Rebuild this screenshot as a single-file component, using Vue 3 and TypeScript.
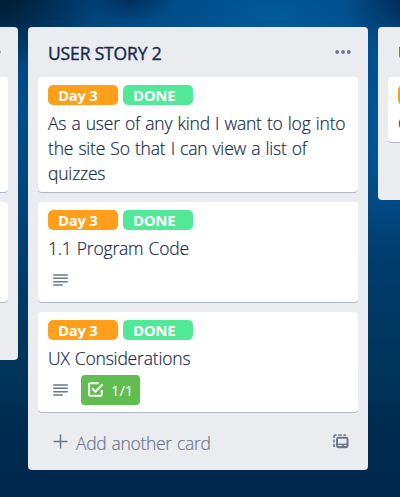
<script setup lang="ts">
interface Card {
  title: string
  description?: boolean
  checklist?: string
}

interface List {
  name: string
  cards: Card[]
}

const lists: List[] = [
  {
    name: 'USER STORY 1',
    cards: [
      { title: 'As a user of any kind I want to be able to register an account So that I can log into the site' },
      { title: 'UX Design', description: true },
    ],
  },
  {
    name: 'USER STORY 2',
    cards: [
      { title: 'As a user of any kind I want to log into the site So that I can view a list of quizzes' },
      { title: '1.1 Program Code', description: true },
      { title: 'UX Considerations', description: true, checklist: '1/1' },
    ],
  },
  {
    name: 'USER STORY 3',
    cards: [{ title: 'Code' }],
  },
]
</script>

<template>
  <main class="board">
    <section v-for="list in lists" :key="list.name" class="list">
      <header class="list-header">
        <h2>{{ list.name }}</h2>
        <svg class="dots" width="16" height="6" viewBox="0 0 16 6">
          <circle cx="2.2" cy="3" r="1.9" />
          <circle cx="8" cy="3" r="1.9" />
          <circle cx="13.8" cy="3" r="1.9" />
        </svg>
      </header>

      <div class="cards">
        <article v-for="card in list.cards" :key="card.title" class="card">
          <div class="labels">
            <span class="label orange">Day 3</span>
            <span class="label lime">DONE</span>
          </div>
          <p class="title">{{ card.title }}</p>
          <div v-if="card.description" class="badges">
            <svg class="lines" width="15" height="12" viewBox="0 0 15 12">
              <path d="M.7 1h13.6M.7 4.3h13.6M.7 7.7h13.6M.7 11h8.6" />
            </svg>
            <span v-if="card.checklist" class="checklist">
              <svg width="16" height="15" viewBox="0 0 16 15">
                <path d="M11 1.2H2.4Q1.1 1.2 1.1 2.5v10q0 1.3 1.3 1.3h10q1.3 0 1.3-1.3V8" />
                <path d="M4.1 6.2l3.3 3.5L14.6 2.2" />
              </svg>
              <span class="count">{{ card.checklist }}</span>
            </span>
          </div>
        </article>
      </div>

      <footer class="list-footer">
        <svg class="plus" width="15" height="15" viewBox="0 0 15 15">
          <path d="M7.5.5v14M.5 7.5h14" />
        </svg>
        <span class="add">Add another card</span>
        <svg class="template" width="16" height="15" viewBox="0 0 16 15">
          <path class="dash" d="M1 4V1.8Q1 1 1.8 1H3.6M5.2 1h3.6M10.4 1h2.8M1 5.4v3M1 9.8v2.4h1" />
          <rect class="frame" x="4" y="3.8" width="10.5" height="9.4" rx="1.4" />
          <path class="base" d="M4 9.6h10.5v3.6H4z" />
          <path class="slot" d="M5.2 11.5h4M11.3 11.5h2" />
        </svg>
      </footer>
    </section>
  </main>
</template>

<style>
body {
  margin: 0;
  overflow: hidden;
}
</style>

<style scoped>
.board {
  box-sizing: border-box;
  width: 400px;
  height: 497px;
  overflow: hidden;
  padding-top: 27px;
  display: flex;
  align-items: flex-start;
  gap: 10px;
  color: #172b4d;
  font-family: "Open Sans", "Noto Sans", sans-serif;
  background:
    radial-gradient(ellipse 100px 75px at 0 -5px, #001f38 15%, rgba(0, 31, 56, 0) 100%),
    radial-gradient(ellipse 60px 50px at 405px 0, rgba(0, 40, 85, 0.9), rgba(0, 40, 85, 0) 100%),
    radial-gradient(ellipse 45px 22px at 130px 0, rgba(0, 38, 80, 0.7), rgba(0, 38, 80, 0) 100%),
    radial-gradient(ellipse 190px 90px at 275px 15px, #005a9a, rgba(0, 90, 154, 0) 100%),
    radial-gradient(ellipse 50px 110px at 385px 130px, #005797, rgba(0, 87, 151, 0) 100%),
    linear-gradient(#00427a 0, #004d8a 110px, #00457c 200px, #003a67 290px, #003358 380px, #002b50 430px, #00284c 497px);
}

.list {
  flex: 0 0 340px;
  box-sizing: border-box;
  padding: 0 10px;
  border-radius: 4px;
  background: #ebecf0;
}

.list:first-child {
  margin-left: -322px;
}

.list-header {
  height: 50px;
  padding: 0 6px 0 10px;
  display: flex;
  align-items: center;
  justify-content: space-between;
}

h2 {
  margin: 3px 0 0;
  font-size: 17.5px;
  line-height: 25px;
  font-weight: 400;
  letter-spacing: -0.15px;
  -webkit-text-stroke: 0.4px currentColor;
}

.dots {
  fill: #6b778c;
  margin-right: 1px;
}

.cards {
  display: flex;
  flex-direction: column;
  gap: 10px;
}

.card {
  box-sizing: border-box;
  padding: 8px 10px 5px;
  border-radius: 4px;
  background: #fff;
  box-shadow: 0 1px 0 rgba(9, 30, 66, 0.25);
}

.labels {
  display: flex;
  gap: 5px;
}

.label {
  box-sizing: border-box;
  width: 70px;
  height: 20px;
  padding-left: 10px;
  border-radius: 5px;
  color: #fff;
  font-size: 15px;
  line-height: 21px;
  font-weight: 700;
  letter-spacing: -0.35px;
}

.orange {
  background: #ff9f1a;
}

.lime {
  background: #51e898;
}

.title {
  margin: 0;
  padding: 6px 0 1px;
  font-size: 17.5px;
  line-height: 25px;
  font-weight: 300;
  letter-spacing: -0.19px;
  word-spacing: 0.8px;
  -webkit-text-stroke: 0.2px currentColor;
}

.badges {
  height: 30px;
  padding: 3px 0 2px 5px;
  display: flex;
  align-items: center;
  gap: 13px;
}

.lines {
  fill: none;
  stroke: #6b778c;
  stroke-width: 1.4;
  stroke-linecap: round;
  margin-top: -1px;
}

.checklist {
  box-sizing: border-box;
  width: 59px;
  height: 30px;
  padding-left: 7px;
  display: flex;
  align-items: center;
  gap: 7px;
  border-radius: 4px;
  background: #61bd4f;
  color: #fff;
  font-size: 15px;
  line-height: 20px;
}

.count {
  margin-top: -1px;
  letter-spacing: -0.2px;
}

.checklist svg {
  fill: none;
  stroke: #fff;
  stroke-width: 2;
  margin-top: -2px;
}

.list-footer {
  height: 58px;
  padding: 4px 9px 0 15px;
  box-sizing: border-box;
  display: flex;
  align-items: center;
  color: #6b778c;
}

.list-footer svg {
  fill: none;
  stroke: #6b778c;
  margin-top: -3px;
}

.plus {
  stroke-width: 1.5;
  margin-right: 8px;
}

.add {
  font-size: 17.5px;
  line-height: 25px;
  font-weight: 300;
  letter-spacing: -0.3px;
  word-spacing: 0.8px;
  -webkit-text-stroke: 0.2px currentColor;
}

.template {
  margin-left: auto;
}

.dash {
  stroke-width: 1.5;
}

.frame {
  stroke-width: 2;
}

.list-footer .base {
  fill: #6b778c;
  stroke: none;
}

.list-footer .slot {
  stroke: #ebecf0;
  stroke-width: 1;
}
</style>
